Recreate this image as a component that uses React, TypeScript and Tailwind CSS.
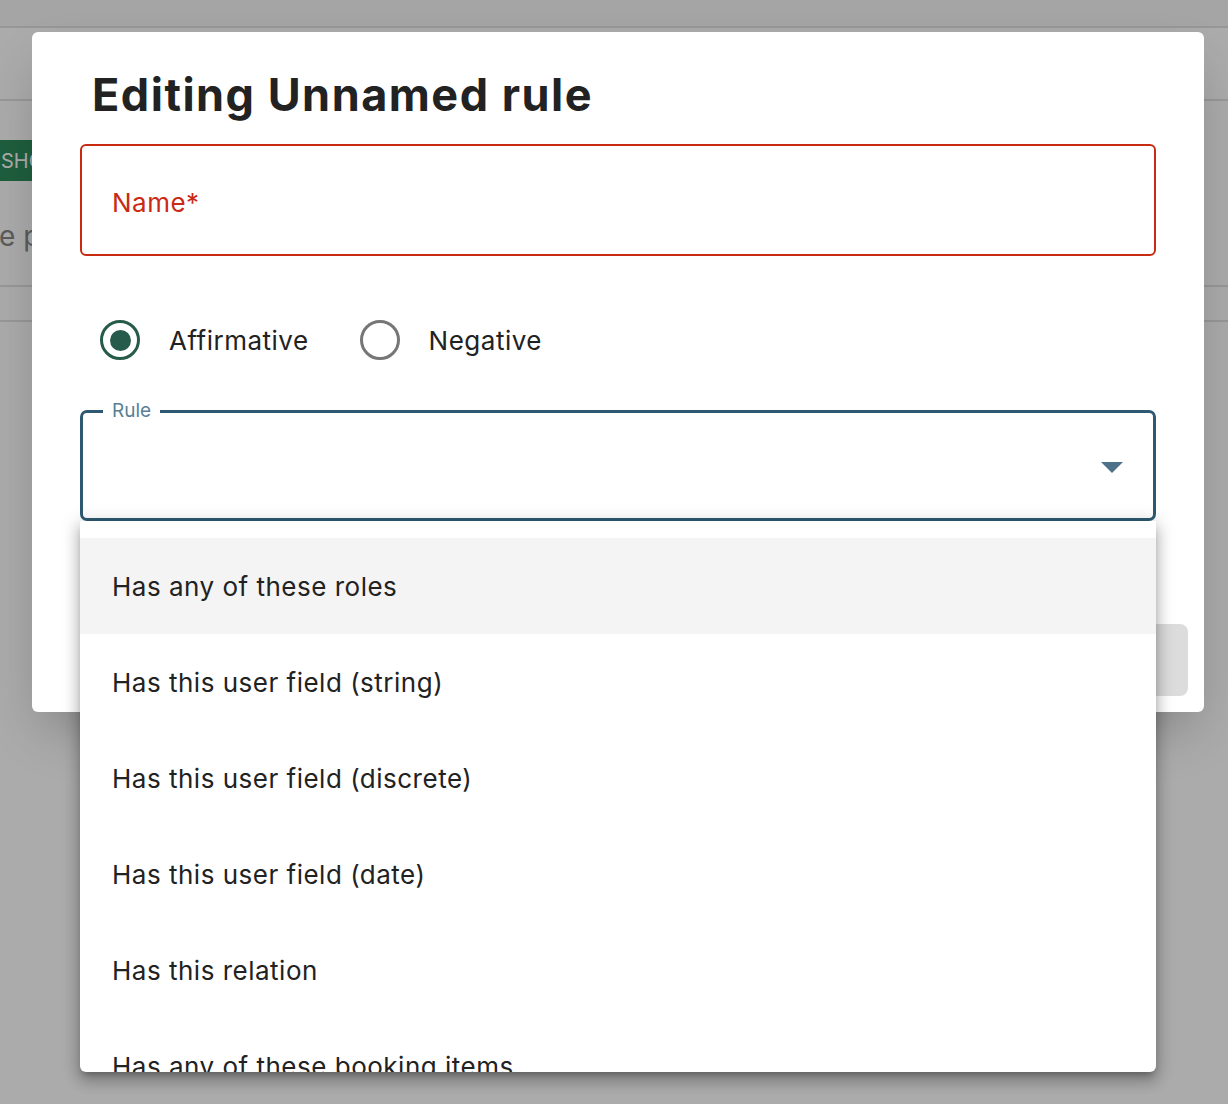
import React from 'react';

const options = [
  'Has any of these roles',
  'Has this user field (string)',
  'Has this user field (discrete)',
  'Has this user field (date)',
  'Has this relation',
  'Has any of these booking items',
];

const Radio: React.FC<{ checked?: boolean; label: string }> = ({ checked, label }) => (
  <label className="flex items-center gap-[29px]">
    <span
      className={`flex h-[40px] w-[40px] items-center justify-center rounded-full border-[3px] ${
        checked ? 'border-[#265a4a]' : 'border-[#767676]'
      }`}
    >
      {checked && <span className="h-[21px] w-[21px] rounded-full bg-[#265a4a]" />}
    </span>
    <span className="text-[26px] tracking-[0.5px] text-[#222]">{label}</span>
  </label>
);

export default function App() {
  return (
    <div
      className="relative h-[1104px] w-[1228px] overflow-hidden bg-white"
      style={{ fontFamily: 'Inter, "Noto Sans", sans-serif' }}
    >
      {/* page behind the dialog */}
      <div className="h-[28px] border-b-2 border-[#e2e2e2] bg-[#f6f6f6]" />
      <div className="h-[73px] border-b-2 border-[#e2e2e2]" />
      <div className="pt-[39px]">
        <div className="flex h-[41px] w-[120px] items-center bg-[#2d8c5c] pl-[1px] text-[20px] text-white">SHOW</div>
        <div className="ml-[-1px] mt-[34px] text-[28px] text-[#888]">e people</div>
      </div>
      <div className="mt-[28px] h-[2px] bg-[#e2e2e2]" />
      <div className="mt-[33px] h-[2px] bg-[#e2e2e2]" />

      {/* overlay */}
      <div className="absolute inset-0 bg-black/[0.33]" />

      {/* dialog */}
      <div className="absolute left-[32px] top-[32px] flex h-[680px] w-[1172px] flex-col rounded-[6px] bg-white px-[48px] pt-[37px] shadow-2xl">
        <h2 className="ml-[12px] text-[45px] font-bold leading-[52px] tracking-[1.5px] text-[#222]">Editing Unnamed rule</h2>

        <div className="mt-[23px] flex h-[112px] items-center rounded-[6px] border-2 border-[#c92a14] px-[30px] pt-[4px]">
          <span className="text-[26px] tracking-[0.5px] text-[#c92a14]">Name*</span>
        </div>

        <div className="mt-[64px] flex items-center gap-[51px] pl-[20px]">
          <Radio checked label="Affirmative" />
          <Radio label="Negative" />
        </div>

        <div className="relative mt-[50px] h-[111px] rounded-[7px] border-[3px] border-[#2d5a72]">
          <span className="absolute left-[20px] top-[-14px] bg-white px-[9px] text-[19px] leading-[24px] text-[#5a7f95]">Rule</span>
          <svg className="absolute right-[30px] top-[49px]" width="22" height="11" viewBox="0 0 22 11">
            <path d="M0 0h22L11 11z" fill="#4d7189" />
          </svg>
        </div>

        <div className="mt-auto mb-[16px] flex justify-end">
          <div className="mr-[-32px] h-[72px] w-[160px] rounded-[8px] bg-[#dcdcdc]" />
        </div>
      </div>

      {/* open select menu */}
      <div className="absolute left-[80px] top-[521px] h-[551px] w-[1076px] overflow-hidden rounded-b-[6px] bg-white pt-[17px] shadow-[0_5px_6px_-3px_rgba(0,0,0,0.25),0_9px_14px_1px_rgba(0,0,0,0.18),0_3px_18px_3px_rgba(0,0,0,0.15)]">
        {options.map((o, i) => (
          <div
            key={o}
            className={`flex h-[96px] shrink-0 items-center px-[32px] text-[26px] tracking-[0.5px] text-[#222] ${i === 0 ? 'bg-[#f4f4f4]' : ''}`}
          >
            {o}
          </div>
        ))}
      </div>
    </div>
  );
}
